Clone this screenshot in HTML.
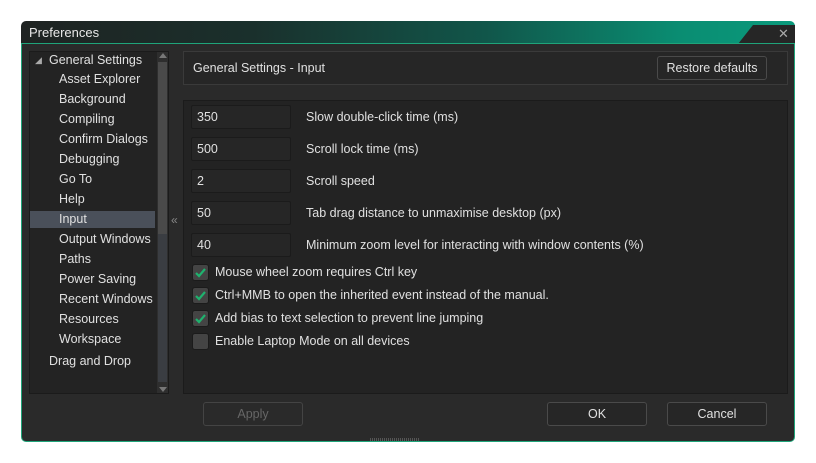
<!DOCTYPE html>
<html><head><style>
*{box-sizing:border-box;margin:0;padding:0}
body{width:816px;height:463px;background:#fff;position:relative;font-family:"Liberation Sans",sans-serif;font-size:12.5px;color:#e0e0e0;overflow:hidden}
.abs{position:absolute}
#title{left:21px;top:21px;width:774px;height:23px;border-radius:5px 5px 0 0;background:linear-gradient(90deg,#1f2322 0%,#1a302c 30%,#11564a 60%,#0a8d72 85%,#0a9a7c 100%)}
#title span{position:absolute;left:8px;top:4px;color:#e8e8e8;font-size:13px}
#notch{left:738px;top:25px;width:57px;height:19px;background:#262626;clip-path:polygon(15px 0,100% 0,100% 100%,0 100%)}
#x{left:778px;top:26px;color:#aaa;font-size:13px}
#win{left:21px;top:43px;width:774px;height:399px;background:#2a2a2a;border:1px solid #1fa47a;border-radius:0 0 5px 5px}
.panel{background:#232323;border:1px solid #1b1b1b}
.tree div{position:absolute;white-space:nowrap}
.in{position:absolute;left:191px;width:100px;height:24px;background:#262626;border:1px solid #1b1b1b;border-radius:2px;padding:4px 0 0 5px}
.lb{position:absolute;left:306px}
.cb{position:absolute;left:192px;width:17px;height:17px;background:#444;border:1px solid #1b1b1b;border-radius:3px}
.cl{position:absolute;left:215px}
.btn{position:absolute;height:24px;border:1px solid #4a4a4a;border-radius:3px;background:#262626;text-align:center;padding-top:4px}
</style></head><body>
<div class="abs" id="title"><span>Preferences</span></div>
<div class="abs" id="notch"></div>
<div class="abs" id="x">✕</div>
<div class="abs" id="win"></div>
<div class="abs panel" style="left:29px;top:51px;width:140px;height:343px"></div>
<div class="abs" style="left:157px;top:52px;width:11px;height:341px;background:#2e2e2e"></div>
<div class="abs" style="left:158px;top:62px;width:9px;height:172px;background:#4a4a4a"></div>
<div class="abs" style="left:158px;top:234px;width:9px;height:148px;background:#3a3d42"></div>
<div class="abs" style="left:159px;top:53px;width:0;height:0;border-left:4px solid transparent;border-right:4px solid transparent;border-bottom:5px solid #777"></div>
<div class="abs" style="left:159px;top:387px;width:0;height:0;border-left:4px solid transparent;border-right:4px solid transparent;border-top:5px solid #777"></div>
<div class="abs" style="left:30px;top:211px;width:125px;height:17px;background:#4a505a"></div>
<div class="tree">
<div style="left:35px;top:55px;font-size:9px;color:#aaa">◢</div>
<div style="left:49px;top:53px">General Settings</div>
<div style="left:59px;top:72px">Asset Explorer</div>
<div style="left:59px;top:92px">Background</div>
<div style="left:59px;top:112px">Compiling</div>
<div style="left:59px;top:132px">Confirm Dialogs</div>
<div style="left:59px;top:152px">Debugging</div>
<div style="left:59px;top:172px">Go To</div>
<div style="left:59px;top:192px">Help</div>
<div style="left:59px;top:212px">Input</div>
<div style="left:59px;top:232px">Output Windows</div>
<div style="left:59px;top:252px">Paths</div>
<div style="left:59px;top:272px">Power Saving</div>
<div style="left:59px;top:292px">Recent Windows</div>
<div style="left:59px;top:312px">Resources</div>
<div style="left:59px;top:332px">Workspace</div>
<div style="left:49px;top:354px">Drag and Drop</div>
</div>
<div class="abs" style="left:171px;top:213px;color:#888;font-size:12px">«</div>
<div class="abs panel" style="left:183px;top:51px;width:605px;height:34px;background:#262626;border-color:#3a3a3a"></div>
<div class="abs" style="left:193px;top:61px">General Settings - Input</div>
<div class="btn" style="left:657px;top:56px;width:110px">Restore defaults</div>
<div class="abs panel" style="left:183px;top:100px;width:605px;height:294px"></div>
<div class="in" style="top:105px">350</div><div class="lb" style="top:110px">Slow double-click time (ms)</div>
<div class="in" style="top:137px">500</div><div class="lb" style="top:142px">Scroll lock time (ms)</div>
<div class="in" style="top:169px">2</div><div class="lb" style="top:174px">Scroll speed</div>
<div class="in" style="top:201px">50</div><div class="lb" style="top:206px">Tab drag distance to unmaximise desktop (px)</div>
<div class="in" style="top:233px">40</div><div class="lb" style="top:238px">Minimum zoom level for interacting with window contents (%)</div>
<div class="cb" style="top:264px"><svg width="15" height="15"><path d="M3 8l3 3 6-7" stroke="#1fb26e" stroke-width="2.2" fill="none"/></svg></div><div class="cl" style="top:265px">Mouse wheel zoom requires Ctrl key</div>
<div class="cb" style="top:287px"><svg width="15" height="15"><path d="M3 8l3 3 6-7" stroke="#1fb26e" stroke-width="2.2" fill="none"/></svg></div><div class="cl" style="top:288px">Ctrl+MMB to open the inherited event instead of the manual.</div>
<div class="cb" style="top:310px"><svg width="15" height="15"><path d="M3 8l3 3 6-7" stroke="#1fb26e" stroke-width="2.2" fill="none"/></svg></div><div class="cl" style="top:311px">Add bias to text selection to prevent line jumping</div>
<div class="cb" style="top:333px"></div><div class="cl" style="top:334px">Enable Laptop Mode on all devices</div>
<div class="btn" style="left:203px;top:402px;width:100px;color:#666;border-color:#444;background:#2a2a2a">Apply</div>
<div class="btn" style="left:547px;top:402px;width:100px">OK</div>
<div class="btn" style="left:667px;top:402px;width:100px">Cancel</div>
<div class="abs" style="left:370px;top:438px;width:50px;height:3px;background:repeating-linear-gradient(90deg,#555 0 1px,transparent 1px 2px)"></div>
</body></html>
